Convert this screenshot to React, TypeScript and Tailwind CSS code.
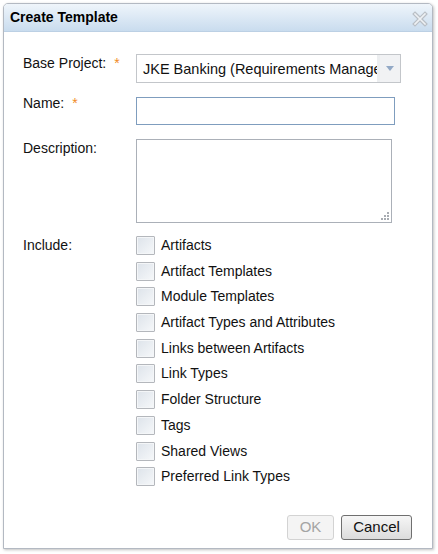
import type { ReactNode } from "react";

const includeOptions = [
  "Artifacts",
  "Artifact Templates",
  "Module Templates",
  "Artifact Types and Attributes",
  "Links between Artifacts",
  "Link Types",
  "Folder Structure",
  "Tags",
  "Shared Views",
  "Preferred Link Types",
];

function Required() {
  return <span className="ml-[8px] text-[#f08a24]">*</span>;
}

function FieldRow({
  label,
  labelClass,
  children,
}: {
  label: ReactNode;
  labelClass?: string;
  children: ReactNode;
}) {
  return (
    <div className="flex items-start">
      <div className={`w-[113px] shrink-0 leading-[16px] ${labelClass ?? ""}`}>{label}</div>
      {children}
    </div>
  );
}

function Checkbox({ label }: { label: string }) {
  return (
    <label className="flex h-[25.7px] items-start">
      <span className="h-[19px] w-[19px] shrink-0 rounded-[1px] border border-[#b4b7bc] bg-gradient-to-br from-[#dde3ea] to-[#f6f8fa] shadow-[inset_0_0_0_1px_#f4f6f8]" />
      <span className="ml-[6px] leading-[19px]">{label}</span>
    </label>
  );
}

export default function App() {
  return (
    <div
      className="h-[554px] w-[438px] overflow-hidden bg-white pl-[3px] pt-[3px] text-[14px] text-[#111]"
      style={{ fontFamily: '"Liberation Sans", Arial, sans-serif' }}
    >
      <div className="flex h-[546px] w-[430px] flex-col rounded-t-[5px] border border-[#b3b9c2] bg-white shadow-[1px_1px_3px_rgba(0,0,0,0.25)]">
        <div className="flex h-[28px] shrink-0 items-center justify-between rounded-t-[4px] border-b border-[#bcd0e4] bg-gradient-to-b from-[#eff5fb] to-[#c9dcee] pl-[6px] pr-[4px]">
          <span className="font-bold text-black">Create Template</span>
          <svg width="16" height="16" viewBox="0 0 16 16" className="mt-[2px]">
            <path d="M3 3 L13 13 M13 3 L3 13" stroke="#b9bfc6" strokeWidth="4" strokeLinecap="square" />
            <path d="M3 3 L13 13 M13 3 L3 13" stroke="#eef1f4" strokeWidth="1.6" strokeLinecap="square" />
          </svg>
        </div>

        <div className="flex flex-1 flex-col pl-[19px] pr-[20px]">
          <div className="mt-[22px]">
            <FieldRow
              labelClass="mt-[1px]"
              label={
                <>
                  Base Project:
                  <Required />
                </>
              }
            >
              <div className="flex h-[29px] w-[265px] items-stretch border border-[#c3c6ca] bg-white">
                <div className="flex-1 overflow-hidden whitespace-nowrap pl-[6px] pt-[6px] text-[14.5px] leading-[16px]">
                  JKE Banking (Requirements Management)
                </div>
                <div className="w-[3px] shrink-0 bg-[#eceef0]" />
                <div className="flex w-[20px] shrink-0 items-center justify-center bg-[#f1f2f4]">
                  <svg width="8" height="5" viewBox="0 0 8 5">
                    <path d="M0 0 H8 L4 5 Z" fill="#93a9c6" />
                  </svg>
                </div>
              </div>
            </FieldRow>
          </div>

          <div className="mt-[14px]">
            <FieldRow
              labelClass="-mt-[2px]"
              label={
                <>
                  Name:
                  <Required />
                </>
              }
            >
              <div className="h-[28px] w-[259px] border border-[#7f9dbe] bg-white" />
            </FieldRow>
          </div>

          <div className="mt-[14px]">
            <FieldRow label="Description:" labelClass="mt-[1px]">
              <div className="relative h-[84px] w-[256px] border border-[#abb0b8] bg-white">
                <svg width="9" height="9" viewBox="0 0 9 9" className="absolute bottom-[2px] right-[2px]">
                  <g fill="#a8acb2">
                    <rect x="7" y="1" width="2" height="2" />
                    <rect x="4" y="4" width="2" height="2" />
                    <rect x="7" y="4" width="2" height="2" />
                    <rect x="1" y="7" width="2" height="2" />
                    <rect x="4" y="7" width="2" height="2" />
                    <rect x="7" y="7" width="2" height="2" />
                  </g>
                </svg>
              </div>
            </FieldRow>
          </div>

          <div className="mt-[13px]">
            <FieldRow label="Include:" labelClass="mt-[1px]">
              <div className="flex flex-col">
                {includeOptions.map((opt) => (
                  <Checkbox key={opt} label={opt} />
                ))}
              </div>
            </FieldRow>
          </div>

          <div className="mt-auto mb-[8px] flex justify-end gap-[7px]">
            <button
              type="button"
              disabled
              className="h-[25px] w-[47px] rounded-[3px] border border-[#d3d3d3] bg-[#f4f4f4] text-[15px] text-[#a4a4a4]"
            >
              OK
            </button>
            <button
              type="button"
              className="h-[25px] w-[71px] rounded-[3px] border border-[#6f6f6f] bg-gradient-to-b from-[#f6f6f6] to-[#dcdcdc] text-[15px] text-[#111]"
            >
              Cancel
            </button>
          </div>
        </div>
      </div>
    </div>
  );
}
